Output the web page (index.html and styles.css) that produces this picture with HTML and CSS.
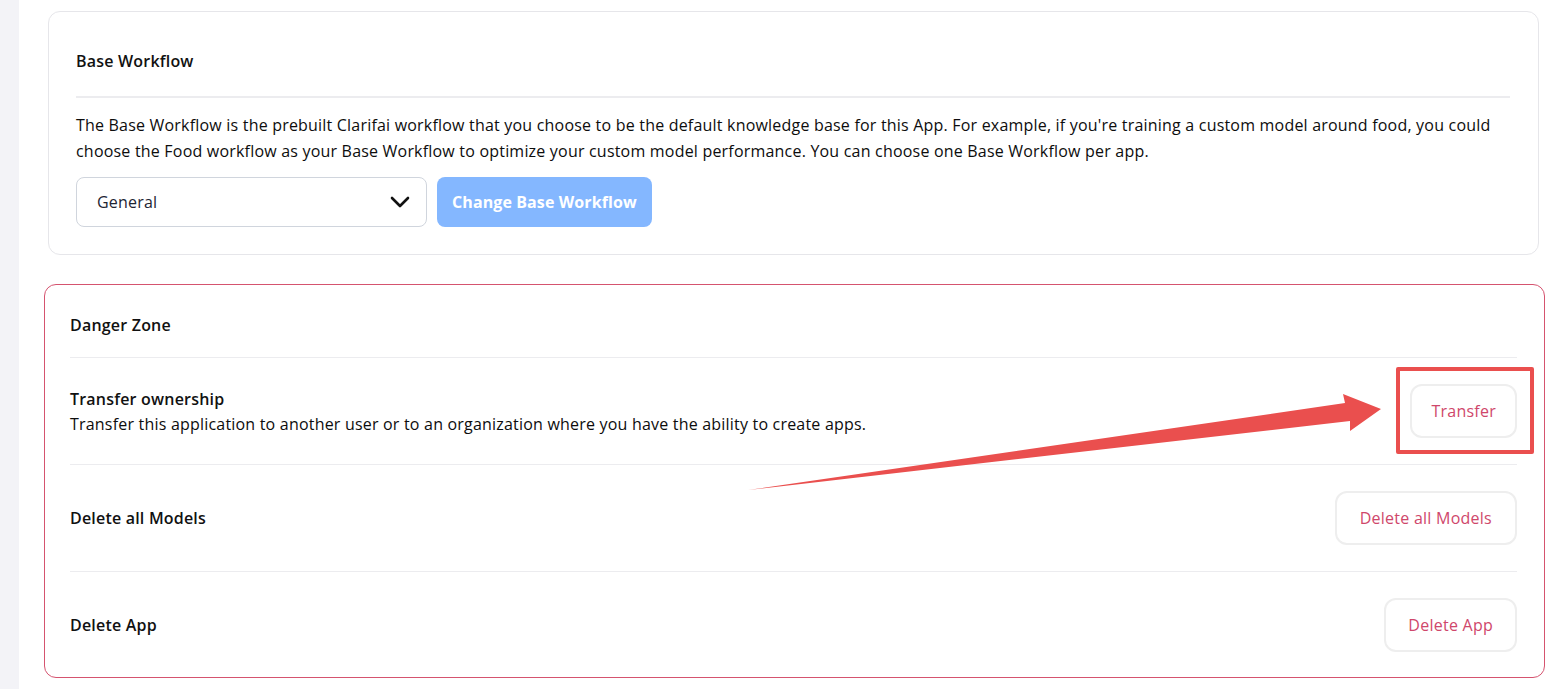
FILE: index.html
```html
<!DOCTYPE html>
<html>
<head>
<meta charset="utf-8">
<link rel="stylesheet" href="styles.css">
</head>
<body>
<div class="page">
  <aside class="rail"></aside>
  <main class="main">
    <section class="card">
      <div class="card-head">Base Workflow</div>
      <p class="desc">The Base Workflow is the prebuilt Clarifai workflow that you choose to be the default knowledge base for this App. For example, if you're training a custom model around food, you could choose the Food workflow as your Base Workflow to optimize your custom model performance. You can choose one Base Workflow per app.</p>
      <div class="controls">
        <div class="select">
          <span>General</span>
          <svg class="chev" width="20" height="12" viewBox="0 0 20 12"><path d="M2 2 L10 10 L18 2" fill="none" stroke="#111" stroke-width="2.6" stroke-linecap="round" stroke-linejoin="round"/></svg>
        </div>
        <button class="primary">Change Base Workflow</button>
      </div>
    </section>

    <section class="danger">
      <div class="danger-head">Danger Zone</div>
      <div class="row">
        <div class="row-text">
          <div class="row-title">Transfer ownership</div>
          <div class="row-sub">Transfer this application to another user or to an organization where you have the ability to create apps.</div>
        </div>
        <div class="btn-wrap">
          <button class="ghost narrow">Transfer</button>
          <span class="highlight"></span>
        </div>
      </div>
      <div class="row">
        <div class="row-title">Delete all Models</div>
        <button class="ghost wide">Delete all Models</button>
      </div>
      <div class="row last">
        <div class="row-title">Delete App</div>
        <button class="ghost">Delete App</button>
      </div>
    </section>
  </main>
  <svg class="arrow" width="1557" height="689" viewBox="0 0 1557 689">
    <polygon points="748,490 1345,403 1343,394 1381,409 1350,431 1350,421" fill="#ea4f4e"/>
  </svg>
</div>
</body>
</html>
```

FILE: styles.css
```css
* { box-sizing: border-box; }
html, body { margin: 0; padding: 0; background: #fff; }
body {
  font-family: "Open Sans", "Noto Sans", sans-serif;
  font-size: 16px;
  letter-spacing: 0.2px;
  color: #101828;
}
.page {
  display: flex;
  min-height: 689px;
  position: relative;
  overflow: hidden;
}
.rail {
  width: 19px;
  flex: none;
  background: #f3f3f7;
}
.main {
  flex: 1;
  padding: 11px 18px 0 29px;
}
.card {
  border: 1px solid #e6e6ea;
  border-radius: 12px;
  padding: 0 28px 27px 27px;
}
.card-head {
  font-weight: 600;
  line-height: 24px;
  padding: 37px 0 23px;
  border-bottom: 2px solid #ececef;
  color: #111;
}
.desc {
  margin: 14px 0 13px;
  line-height: 26px;
  color: #0d0d0d;
}
.controls {
  display: flex;
  gap: 10px;
}
.select {
  width: 351px;
  height: 50px;
  border: 1px solid #d0d5dd;
  border-radius: 8px;
  display: flex;
  align-items: center;
  justify-content: space-between;
  padding: 0 16px 0 20px;
  font-weight: 500;
  color: #1d2433;
}
.primary {
  height: 50px;
  border: none;
  border-radius: 8px;
  background: #84b7ff;
  color: #fff;
  font-family: inherit;
  font-size: 16px;
  letter-spacing: 0.1px;
  font-weight: 700;
  padding: 0 15px;
}
.danger {
  margin: 29px -6px 0 -4px;
  border: 1px solid #d5536f;
  border-radius: 12px;
  padding: 0 27px 0 25px;
}
.danger-head {
  font-weight: 600;
  line-height: 24px;
  padding: 28px 0 20px;
  border-bottom: 1px solid #ececef;
  color: #111;
}
.row {
  display: flex;
  align-items: center;
  justify-content: space-between;
  height: 107px;
  border-bottom: 1px solid #ececef;
}
.row.last { border-bottom: none; height: 105px; }
.row-text { padding-top: 1px; }
.row-title {
  font-weight: 600;
  line-height: 24px;
  color: #111;
}
.row-sub {
  line-height: 26px;
  color: #0d0d0d;
}
.btn-wrap { position: relative; }
.ghost {
  height: 54px;
  border: 2px solid #eeeeee;
  border-radius: 12px;
  background: #fff;
  color: #cf476b;
  font-family: inherit;
  font-size: 16px;
  letter-spacing: 0.25px;
  font-weight: 500;
  padding: 0 22px;
}
.ghost.narrow { padding: 0 19px; }
.ghost.wide { padding: 0 23px; }
.highlight {
  position: absolute;
  left: -14px;
  top: -17px;
  width: 138px;
  height: 87px;
  border: 4px solid #ea4f4e;
  border-radius: 2px;
}
.arrow {
  position: absolute;
  left: 0;
  top: 0;
  pointer-events: none;
}
```
